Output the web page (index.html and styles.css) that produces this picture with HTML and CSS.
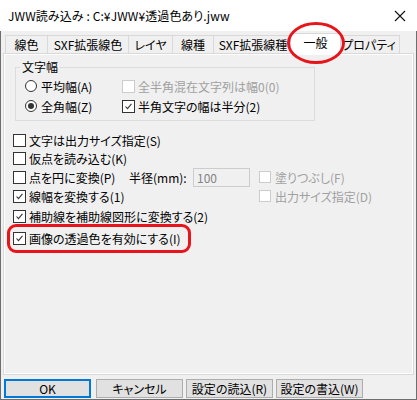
FILE: index.html
```html
<!DOCTYPE html>
<html lang="ja">
<head>
<meta charset="utf-8">
<title>JWW読み込み</title>
<link rel="stylesheet" href="styles.css">
</head>
<body>
<div class="window">
  <div class="titlebar">
    <span class="title">JWW読み込み : C:¥JWW¥透過色あり.jww</span>
    <svg class="close" width="12" height="12" viewBox="0 0 12 12"><path d="M1 1L11 11M11 1L1 11" stroke="#111" stroke-width="1.1" fill="none"/></svg>
  </div>
  <div class="frame">
    <div class="tabs">
      <div class="tab w43">線色</div>
      <div class="tab w82">SXF拡張線色</div>
      <div class="tab w45">レイヤ</div>
      <div class="tab w42">線種</div>
      <div class="tab w80">SXF拡張線種</div>
      <div class="tab active">一般</div>
      <div class="tab w62">プロパティ</div>
    </div>
    <div class="pane">
      <div class="page">
        <fieldset class="group">
          <legend>文字幅</legend>
          <div class="group-grid">
            <label class="opt"><span class="radio"></span>平均幅(A)</label>
            <label class="opt disabled"><span class="check off"></span>全半角混在文字列は幅0(0)</label>
            <label class="opt"><span class="radio on"></span>全角幅(Z)</label>
            <label class="opt"><span class="check"><svg viewBox="0 0 13 13"><path d="M3 6.5L5.3 9L10 3.5" stroke="#333" stroke-width="1.3" fill="none"/></svg></span>半角文字の幅は半分(2)</label>
          </div>
        </fieldset>
        <div class="options">
          <div class="row"><span class="check"></span>文字は出力サイズ指定(S)</div>
          <div class="row"><span class="check"></span>仮点を読み込む(K)</div>
          <div class="row tall">
            <span class="check"></span><span class="lbl-a">点を円に変換(P)</span>
            <span class="lbl-b">半径(mm):</span>
            <span class="input">100</span>
            <span class="sub disabled"><span class="check off small"></span>塗りつぶし(F)</span>
          </div>
          <div class="row">
            <span class="check"><svg viewBox="0 0 13 13"><path d="M3 6.5L5.3 9L10 3.5" stroke="#333" stroke-width="1.3" fill="none"/></svg></span><span class="lbl-c">線幅を変換する(1)</span>
            <span class="sub disabled"><span class="check off small"></span>出力サイズ指定(D)</span>
          </div>
          <div class="row gap2"><span class="check"><svg viewBox="0 0 13 13"><path d="M3 6.5L5.3 9L10 3.5" stroke="#333" stroke-width="1.3" fill="none"/></svg></span>補助線を補助線図形に変換する(2)</div>
          <div class="row gap4"><span class="check"><svg viewBox="0 0 13 13"><path d="M3 6.5L5.3 9L10 3.5" stroke="#333" stroke-width="1.3" fill="none"/></svg></span>画像の透過色を有効にする(I)</div>
        </div>
      </div>
    </div>
    <div class="buttons">
      <button class="btn default">OK</button>
      <button class="btn">キャンセル</button>
      <button class="btn">設定の読込(R)</button>
      <button class="btn">設定の書込(W)</button>
    </div>
  </div>
  <div class="mark-ellipse"></div>
  <div class="mark-box"></div>
</div>
</body>
</html>
```
FILE: styles.css
```css
* { box-sizing: border-box; }
html, body { margin: 0; padding: 0; background: #fff; }
body {
  font-family: "Noto Sans CJK JP", "Noto Sans", sans-serif;
  font-size: 12px;
  color: #000;
  font-feature-settings: "palt";
}
.window {
  position: relative;
  width: 417px;
  height: 400px;
  display: flex;
  flex-direction: column;
  background: #fff;
}
.titlebar {
  height: 31px;
  flex: none;
  display: flex;
  align-items: center;
  justify-content: space-between;
  padding: 0 11px 0 8px;
  background: #fff;
}
.title { font-size: 12px; line-height: 16px; letter-spacing: 0.1px; }
.close { width: 12px; height: 12px; }
.frame {
  flex: 1;
  display: flex;
  flex-direction: column;
  background: #f0f0f0;
  border: 1px solid #6e6e6e;
  border-top: none;
  padding: 4px 2px 1px 2px;
}
.tabs {
  height: 18px;
  flex: none;
  display: flex;
  align-items: flex-end;
  padding-left: 2px;
}
.tab {
  height: 18px;
  flex: none;
  border: 1px solid #d9d9d9;
  border-bottom: none;
  background: #f0f0f0;
  margin-left: -1px;
  display: flex;
  align-items: center;
  justify-content: center;
  line-height: 14px;
  white-space: nowrap;
}
.tab:first-child { margin-left: 0; }
.w43 { width: 43px; }
.w82 { width: 82px; }
.w45 { width: 45px; }
.w42 { width: 42px; }
.w80 { width: 80px; }
.w62 { width: 62px; margin-left: -3px; }
.tab.active {
  width: 51px;
  height: 21px;
  margin-left: -3px;
  margin-bottom: -1px;
  background: #fff;
  position: relative;
  z-index: 1;
  padding-bottom: 3px;
}
.pane {
  flex: 1;
  border: 1px solid #d9d9d9;
  background: #fff;
  padding: 1px;
  display: flex;
}
.page {
  flex: 1;
  background: #f0f0f0;
  padding: 5px 0 0 0;
}
.group {
  margin: 0 0 0 10px;
  width: 300px;
  border: 1px solid #dcdcdc;
  padding: 0 0 4px 4px;
  min-width: 0;
}
.group legend {
  padding: 0 2px;
  line-height: 14px;
  height: 14px;
}
.group-grid {
  display: grid;
  grid-template-columns: 97px auto;
  grid-auto-rows: 20px;
  margin: 2px 0 0 5px;
}
.opt {
  display: flex;
  align-items: center;
  white-space: nowrap;
}
.radio {
  width: 12px;
  height: 12px;
  border: 1px solid #333;
  border-radius: 50%;
  background: #fff;
  margin-right: 4px;
  display: flex;
  align-items: center;
  justify-content: center;
  flex: none;
}
.radio.on::after {
  content: "";
  width: 6px;
  height: 6px;
  border-radius: 50%;
  background: #333;
}
.check {
  width: 13px;
  height: 13px;
  border: 1px solid #333;
  background: #fff;
  flex: none;
  margin-right: 3px;
  display: flex;
}
.check svg { width: 11px; height: 11px; }
.check.off { border-color: #cccccc; }
.check.small { width: 12px; height: 12px; margin-right: 4px; }
.disabled { color: #a0a0a0; }
.options {
  padding: 10px 0 0 8px;
}
.row {
  display: flex;
  align-items: center;
  height: 18px;
  white-space: nowrap;
}
.row.tall { height: 20px; }
.row.gap2 { margin-top: 2px; }
.row.gap4 { margin-top: 4px; }
.lbl-a { width: 100px; flex: none; }
.lbl-b { width: 64px; flex: none; }
.lbl-c { width: 230px; flex: none; }
.input {
  width: 57px;
  height: 19px;
  border: 1px solid #cccccc;
  background: #f0f0f0;
  color: #838383;
  padding-left: 3px;
  line-height: 17px;
  flex: none;
}
.sub {
  display: flex;
  align-items: center;
  margin-left: 9px;
}
.row .lbl-c + .sub { margin-left: 0; }
.buttons {
  flex: none;
  display: flex;
  margin: 4px 0 0 1px;
  height: 19px;
}
.btn {
  width: 87px;
  height: 19px;
  margin: 0 3px 0 0;
  padding: 0;
  border: 1px solid #adadad;
  background: #e1e1e1;
  font-family: inherit;
  font-size: 12px;
  line-height: 15px;
  color: #000;
  font-feature-settings: "palt";
}
.btn.default {
  border: 2px solid #0078d7;
  margin-right: 5px;
}
.mark-ellipse {
  position: absolute;
  left: 287px;
  top: 22px;
  width: 58px;
  height: 42px;
  border: 3px solid #e8141b;
  border-radius: 50%;
  z-index: 5;
}
.mark-box {
  position: absolute;
  left: 7px;
  top: 224px;
  width: 184px;
  height: 29px;
  border: 3px solid #e8141b;
  border-radius: 9px;
  z-index: 5;
}
```
